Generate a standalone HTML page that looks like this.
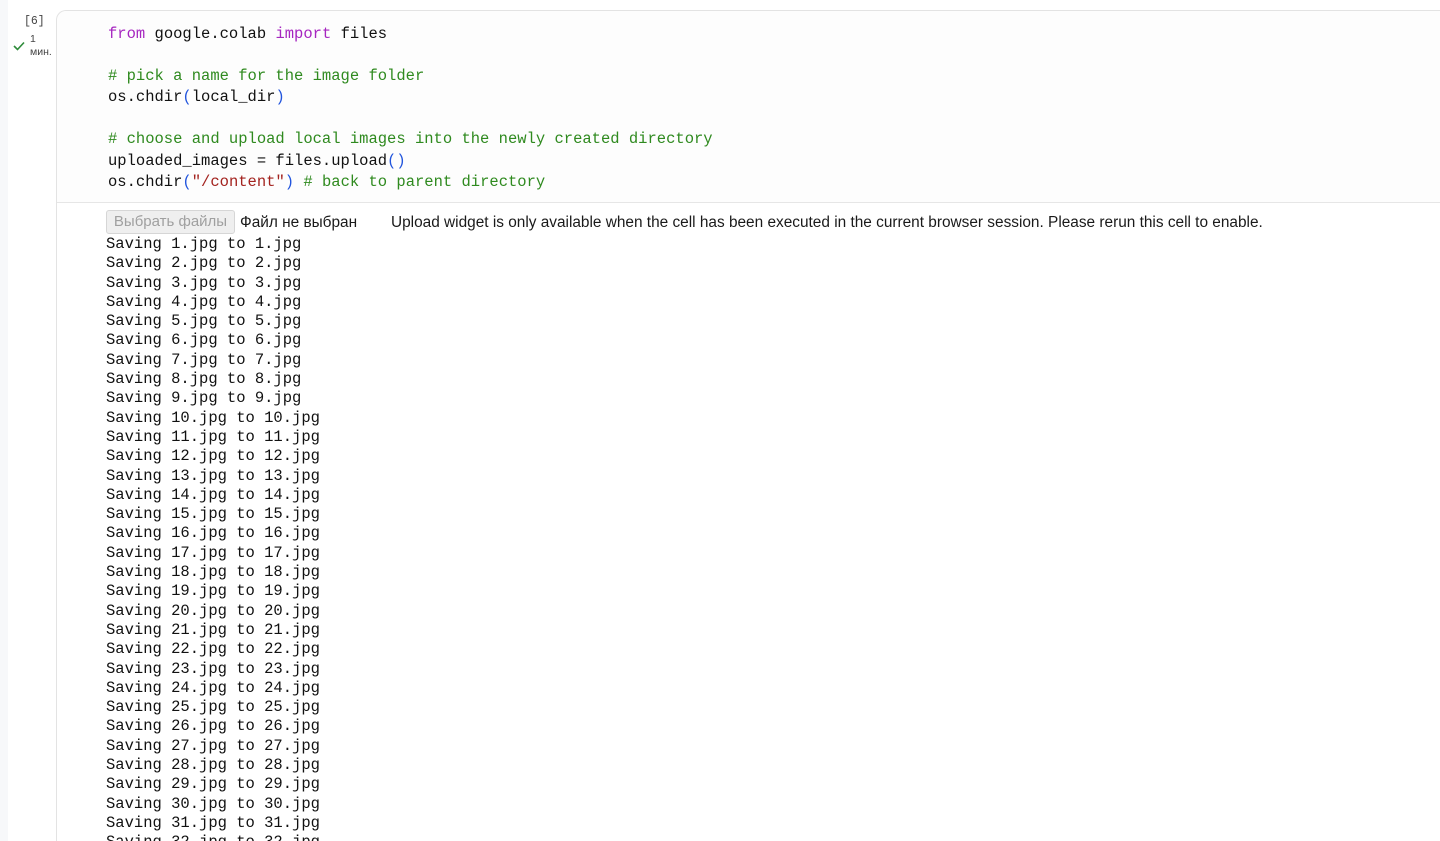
<!DOCTYPE html>
<html style="overflow:hidden;height:841px"><head><meta charset="utf-8"><style>
html,body{margin:0;width:1440px;height:841px;overflow:hidden}
body{background:#fff;position:relative;font-family:"Liberation Sans",sans-serif}
.strip{position:absolute;left:0;top:0;width:8px;height:841px;background:#f7f8fa}
.gut{position:absolute;left:8px;top:0;width:48px;height:841px;background:#fff;border-top-left-radius:14px}
.cell{position:absolute;left:56px;top:10px;width:1384px;height:831px;border-left:1px solid #e3e3e3;border-top:1px solid #e3e3e3;border-top-left-radius:10px;background:#fff}
.code{position:absolute;left:0;top:0;width:100%;height:191px;background:#fdfdfd;border-bottom:1px solid #e6e6e6;border-top-left-radius:10px}
pre{margin:0;font-family:"Liberation Mono",monospace;font-size:15.5px;color:#111}
.c pre{position:absolute;left:108px;top:24px;line-height:21.1px}
.k{color:#a626c0}.m{color:#2f8a1f}.p{color:#2255dd}.s{color:#a3231f}
.o{position:absolute;left:106px;top:235px;line-height:19.3px}
.btn{position:absolute;left:106px;top:210px;width:127px;height:22px;border:1px solid #d6d6d6;background:#efefef;border-radius:3px;color:#a0a0a0;font-size:15px;line-height:22px;text-align:center}
.t{position:absolute;top:214px;font-size:15.4px;color:#1a1a1a}
.num{position:absolute;left:24px;top:15px;font-size:11.5px;color:#444;font-family:"Liberation Mono",monospace}
.tm{position:absolute;left:30px;top:33px;font-size:10.5px;color:#444;line-height:13px}
</style></head><body>
<div class="strip"></div><div class="gut"></div>
<div class="cell"><div class="code"></div></div>
<div class="num">[6]</div>
<svg style="position:absolute;left:13px;top:41px" width="12" height="10" viewBox="0 0 12 10"><path d="M1 5l3.5 3.5L11 1.5" fill="none" stroke="#2e8b3a" stroke-width="1.6"/></svg>
<div class="tm">1<br>мин.</div>
<div class="c"><pre><span class="k">from</span> google.colab <span class="k">import</span> files

<span class="m"># pick a name for the image folder</span>
os.chdir<span class="p">(</span>local_dir<span class="p">)</span>

<span class="m"># choose and upload local images into the newly created directory</span>
uploaded_images = files.upload<span class="p">()</span>
os.chdir<span class="p">(</span><span class="s">"/content"</span><span class="p">)</span> <span class="m"># back to parent directory</span></pre></div>
<div class="btn">Выбрать файлы</div>
<div class="t" style="left:240px">Файл не выбран</div>
<div class="t" style="left:391px">Upload widget is only available when the cell has been executed in the current browser session. Please rerun this cell to enable.</div>
<pre class="o">Saving 1.jpg to 1.jpg
Saving 2.jpg to 2.jpg
Saving 3.jpg to 3.jpg
Saving 4.jpg to 4.jpg
Saving 5.jpg to 5.jpg
Saving 6.jpg to 6.jpg
Saving 7.jpg to 7.jpg
Saving 8.jpg to 8.jpg
Saving 9.jpg to 9.jpg
Saving 10.jpg to 10.jpg
Saving 11.jpg to 11.jpg
Saving 12.jpg to 12.jpg
Saving 13.jpg to 13.jpg
Saving 14.jpg to 14.jpg
Saving 15.jpg to 15.jpg
Saving 16.jpg to 16.jpg
Saving 17.jpg to 17.jpg
Saving 18.jpg to 18.jpg
Saving 19.jpg to 19.jpg
Saving 20.jpg to 20.jpg
Saving 21.jpg to 21.jpg
Saving 22.jpg to 22.jpg
Saving 23.jpg to 23.jpg
Saving 24.jpg to 24.jpg
Saving 25.jpg to 25.jpg
Saving 26.jpg to 26.jpg
Saving 27.jpg to 27.jpg
Saving 28.jpg to 28.jpg
Saving 29.jpg to 29.jpg
Saving 30.jpg to 30.jpg
Saving 31.jpg to 31.jpg
Saving 32.jpg to 32.jpg</pre>
</body></html>
